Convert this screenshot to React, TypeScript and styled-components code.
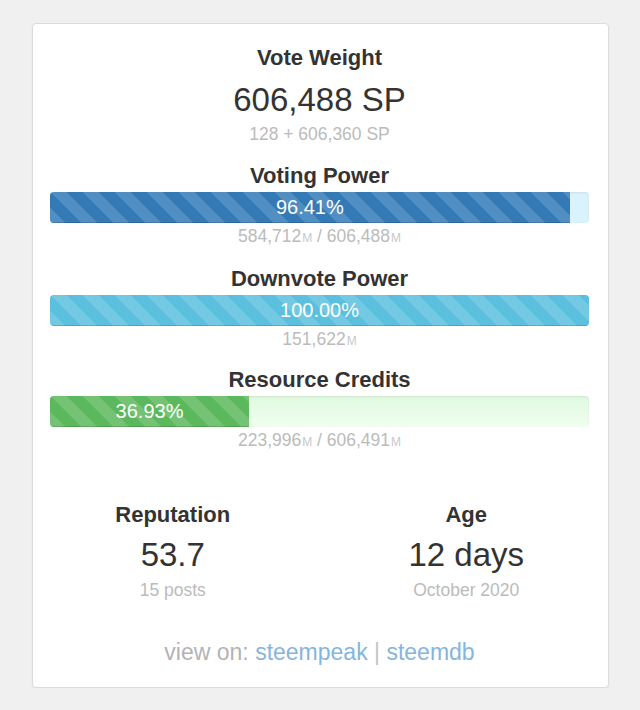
import React from 'react';
import styled, { createGlobalStyle } from 'styled-components';

const GlobalStyle = createGlobalStyle`
  html, body {
    margin: 0;
    padding: 0;
    background: #f0f0f0;
  }
  body {
    font-family: "Liberation Sans", Arial, Helvetica, sans-serif;
    color: #333;
  }
`;

const Card = styled.div`
  box-sizing: border-box;
  width: 577px;
  height: 665px;
  margin: 23px 0 0 32px;
  padding: 21px 19px 0 17px;
  background: #fff;
  border: 1px solid #dcdcdc;
  border-radius: 4px;
  box-shadow: 0 1px 2px rgba(0, 0, 0, 0.06);
  text-align: center;
`;

const Title = styled.div`
  font-size: 22px;
  font-weight: bold;
  line-height: 26px;
  color: #333;
`;

const BigValue = styled.div<{ $gap?: number }>`
  font-size: 33px;
  line-height: 40px;
  color: #333;
  margin-top: ${(p) => p.$gap ?? 8}px;
`;

const Sub = styled.div<{ $gap?: number }>`
  font-size: 17.5px;
  line-height: 22px;
  color: #bbb;
  margin-top: ${(p) => p.$gap ?? 2}px;
`;

const Unit = styled.span`
  font-size: 12px;
  color: #c8c8c8;
  margin-left: 1px;
`;

const Section = styled.div<{ $gap: number }>`
  margin-top: ${(p) => p.$gap}px;
`;

const Track = styled.div<{ $bg: string }>`
  display: flex;
  height: 31px;
  margin-top: 3px;
  border-radius: 4px;
  overflow: hidden;
  background: ${(p) => p.$bg};
  box-shadow: inset 0 1px 2px rgba(0, 0, 0, 0.08);
`;

const Fill = styled.div<{ $color: string }>`
  height: 100%;
  display: flex;
  align-items: center;
  justify-content: center;
  font-size: 20px;
  color: #fff;
  background-color: ${(p) => p.$color};
  background-image: linear-gradient(
    45deg,
    rgba(255, 255, 255, 0.15) 25%,
    transparent 25%,
    transparent 50%,
    rgba(255, 255, 255, 0.15) 50%,
    rgba(255, 255, 255, 0.15) 75%,
    transparent 75%,
    transparent
  );
  background-size: 32px 32px;
  box-shadow: inset 0 -1px 0 rgba(0, 0, 0, 0.15);
`;

const Stats = styled.div`
  display: grid;
  grid-template-columns: 1fr 1fr;
  margin: 49px -24px 0 -24px;
`;

const Stat = styled.div``;

const Footer = styled.div`
  margin-top: 37px;
  font-size: 23px;
  line-height: 28px;
  color: #b3b3b3;
`;

const FooterLink = styled.a`
  color: #86b5dc;
  text-decoration: none;
`;

const Sep = styled.span`
  color: #c4c4c4;
`;

type Bar = {
  title: string;
  pct: number;
  color: string;
  track: string;
  values: string[];
  gap: number;
};

const bars: Bar[] = [
  {
    title: 'Voting Power',
    pct: 96.41,
    color: '#337ab7',
    track: '#d9f2fc',
    values: ['584,712', '606,488'],
    gap: 18,
  },
  {
    title: 'Downvote Power',
    pct: 100,
    color: '#5bc0de',
    track: '#d9f2fc',
    values: ['151,622'],
    gap: 17,
  },
  {
    title: 'Resource Credits',
    pct: 36.93,
    color: '#5cb85c',
    track: 'linear-gradient(#e0f9e0, #effff0)',
    values: ['223,996', '606,491'],
    gap: 15,
  },
];

export default function App() {
  return (
    <>
      <GlobalStyle />
      <Card>
        <Title>Vote Weight</Title>
        <BigValue $gap={9}>606,488 SP</BigValue>
        <Sub $gap={3}>128 + 606,360 SP</Sub>

        {bars.map((b) => (
          <Section key={b.title} $gap={b.gap}>
            <Title>{b.title}</Title>
            <Track $bg={b.track}>
              <Fill $color={b.color} style={{ width: `${b.pct}%` }}>
                {b.pct.toFixed(2)}%
              </Fill>
            </Track>
            <Sub>
              {b.values.map((v, i) => (
                <React.Fragment key={v}>
                  {i > 0 && ' / '}
                  {v}
                  <Unit>M</Unit>
                </React.Fragment>
              ))}
            </Sub>
          </Section>
        ))}

        <Stats>
          <Stat>
            <Title>Reputation</Title>
            <BigValue $gap={7}>53.7</BigValue>
            <Sub $gap={4}>15 posts</Sub>
          </Stat>
          <Stat>
            <Title>Age</Title>
            <BigValue $gap={7}>12 days</BigValue>
            <Sub $gap={4}>October 2020</Sub>
          </Stat>
        </Stats>

        <Footer>
          view on: <FooterLink href="#">steempeak</FooterLink> <Sep>|</Sep>{' '}
          <FooterLink href="#">steemdb</FooterLink>
        </Footer>
      </Card>
    </>
  );
}
